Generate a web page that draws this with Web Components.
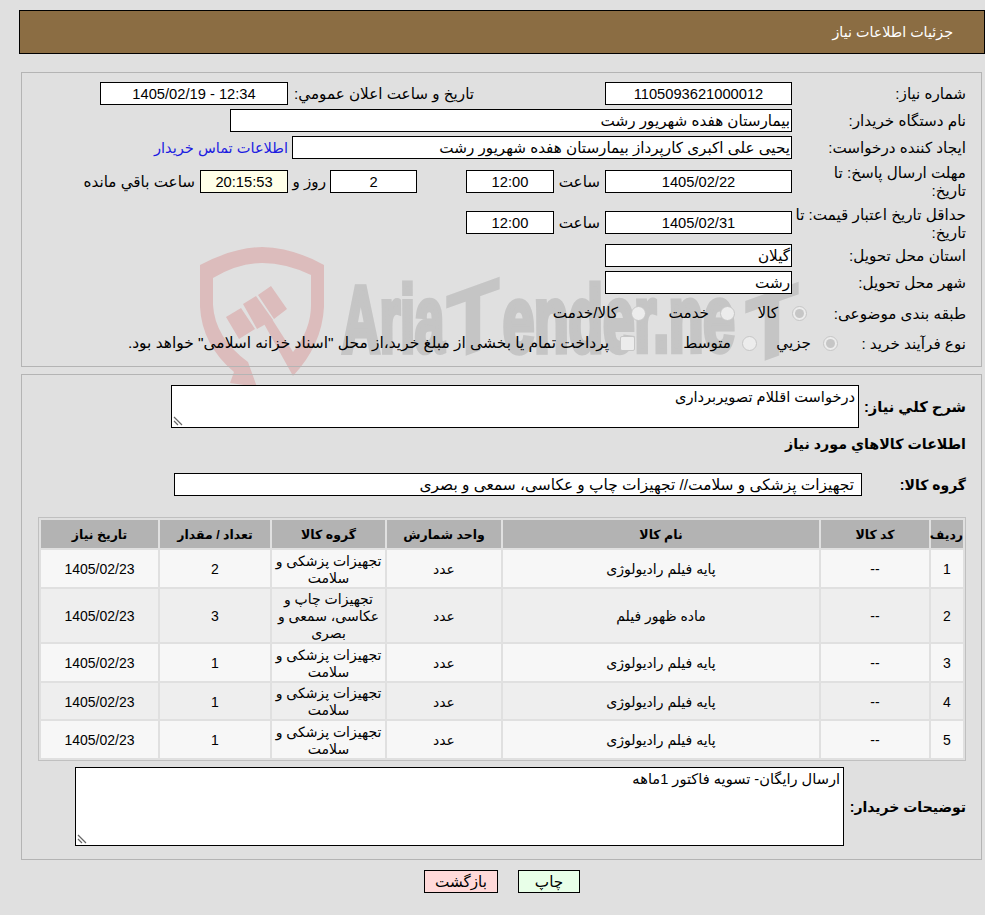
<!DOCTYPE html>
<html lang="fa" dir="rtl">
<head>
<meta charset="utf-8">
<title>جزئیات اطلاعات نیاز</title>
<style>
    html, body { margin: 0; padding: 0; background: #e0e0e0; }
    body { font: 15.2px "Liberation Sans", "DejaVu Sans", sans-serif; color: #000; overflow: hidden; }
</style>
</head>
<body>
<at-page>
    <at-watermark slot="back"></at-watermark>
    <at-header>جزئیات اطلاعات نیاز</at-header>
    <at-panel style="--panel-top: 18px; --panel-h: 295px; --panel-pad: 9px">
        <at-row label="شماره نیاز:" style="--row-h: 23px">
            <at-box w="187" center num>1105093621000012</at-box>
            <at-text style="margin-right: 131px; width: 186px">تاریخ و ساعت اعلان عمومي:</at-text>
            <at-box w="188" center num>12:34 - 1405/02/19</at-box>
        </at-row>
        <at-row label="نام دستگاه خریدار:" style="--row-h: 23px; --row-top: 4px">
            <at-box w="562">بیمارستان هفده شهریور رشت</at-box>
        </at-row>
        <at-row label="ایجاد کننده درخواست:" style="--row-h: 23px; --row-top: 4px">
            <at-box w="500">یحیی علی اکبری کارپرداز بیمارستان هفده شهریور رشت</at-box>
            <at-text style="margin-right: 4px; color: #1c1ce0; font-size: 14.6px">اطلاعات تماس خریدار</at-text>
        </at-row>
        <at-row top label="مهلت ارسال پاسخ: تا تاریخ:" style="--row-h: 42px; --row-top: 4px; --items-top: 7px; --label-pad: 16px">
            <at-box w="187" h="23" center num>1405/02/22</at-box>
            <at-text style="margin-right: 5px; width: 46px">ساعت</at-text>
            <at-box w="88" h="23" center num>12:00</at-box>
            <at-text style="width: 49px"></at-text>
            <at-box w="87" h="23" center num>2</at-box>
            <at-text style="margin-right: 4px; width: 38px">روز و</at-text>
            <at-box w="88" h="23" center num tint="#ffffe8">20:15:53</at-box>
            <at-text style="margin-right: 5px">ساعت باقي مانده</at-text>
        </at-row>
        <at-row top label="حداقل تاریخ اعتبار قیمت: تا تاریخ:" style="--row-h: 35px; --items-top: 6px">
            <at-box w="187" h="23" center num>1405/02/31</at-box>
            <at-text style="margin-right: 5px; width: 46px">ساعت</at-text>
            <at-box w="88" h="23" center num>12:00</at-box>
        </at-row>
        <at-row label="استان محل تحویل:" style="--row-h: 23px; --row-top: 4px">
            <at-box w="187">گیلان</at-box>
        </at-row>
        <at-row label="شهر محل تحویل:" style="--row-h: 23px; --row-top: 4px">
            <at-box w="187">رشت</at-box>
        </at-row>
        <at-row label="طبقه بندی موضوعی:" label-w="159" style="--row-h: 24px; --row-top: 7px">
            <at-radio checked style="width: 72px; --radio-gap: 14px">کالا</at-radio>
            <at-radio style="width: 89px; --radio-gap: 11px">خدمت</at-radio>
            <at-radio style="--radio-gap: 13px">کالا/خدمت</at-radio>
        </at-row>
        <at-row label="نوع فرآیند خرید :" label-w="128" style="--row-h: 24px; --row-top: 6px">
            <at-radio checked style="width: 81px; --radio-gap: 12px">جزيي</at-radio>
            <at-radio style="width: 122px; --radio-gap: 11px">متوسط</at-radio>
            <at-radio square style="--radio-gap: 11px; font-size: 15.45px">پرداخت تمام یا بخشی از مبلغ خرید،از محل "اسناد خزانه اسلامی" خواهد بود.</at-radio>
        </at-row>
    </at-panel>
    <at-panel style="--panel-top: 7px; --panel-h: 486px; --panel-pad: 10px">
        <at-row strong label="شرح كلي نياز:" label-w="107" style="--row-h: 43px; --label-size: 14.7px">
            <at-note w="688" h="43">درخواست اقللام تصویربرداری</at-note>
        </at-row>
        <at-row strong label="اطلاعات كالاهاي مورد نياز" label-w="300" style="--row-h: 22px; --row-top: 4px; --label-size: 14.25px"></at-row>
        <at-row strong label="گروه کالا:" label-w="104" style="--row-h: 23px; --row-top: 19px">
            <at-box w="688" h="23" wide>تجهیزات پزشکی و سلامت// تجهیزات چاپ و عکاسی، سمعی و بصری</at-box>
        </at-row>
        <at-table style="margin-top: 21px"></at-table>
        <at-row strong label="توضیحات خریدار:" label-w="122" style="--row-h: 79px; --row-top: 6px">
            <at-note w="769" h="79">ارسال رایگان- تسویه فاکتور 1ماهه</at-note>
        </at-row>
    </at-panel>
    <at-actions>
        <at-button tint="#e8ffe8" w="62">چاپ</at-button>
        <at-button tint="#ffd9d9" w="74">بازگشت</at-button>
    </at-actions>
</at-page>

<template id="page-tpl">
    <style>
        :host { display: block; position: relative; width: 985px; height: 915px; box-sizing: border-box; padding: 10px 0 0 19px; overflow: hidden; }
        .back { position: absolute; inset: 0; z-index: 0; }
        .front { position: relative; z-index: 1; }
    </style>
    <div class="back"><slot name="back"></slot></div>
    <div class="front"><slot></slot></div>
</template>

<template id="watermark-tpl">
    <style>
        :host { display: block; width: 985px; height: 915px; }
        svg { display: block; }
        text { font: bold 94px "Liberation Sans", sans-serif; fill: #c5c5c5; stroke: #c5c5c5; stroke-width: 6px; direction: ltr; }
        text.bar { stroke-width: 2px; }
    </style>
    <svg width="985" height="915" viewBox="0 0 985 915">
        <path fill="#dcbcbc" fill-rule="evenodd" d="M200 265 Q232 248 262 247 Q294 248 324 265 V307 Q322 345 293 376 L263 322 L270 316 L293 352 Q311 330 311 305 V275 Q286 263 262 263 Q238 263 213 278 V305 Q215 338 248 362 L257 387 L230 383 L234 372 Q202 345 200 307 Z"/>
        <path fill="#dcbcbc" d="M226 317 L241 308 L255 329 L239 339 Z M243 304 L256 296 L273 320 L257 329 Z M258 295 L271 286 L287 309 L274 319 Z"/>
        <text transform="translate(342 352) rotate(-.3) scale(.56 1)">Aria</text>
        <text class="bar" text-anchor="middle" transform="translate(473 352) skewY(-20) scale(.93 1)">T</text>
        <text transform="translate(503 352) rotate(-.3) scale(.6 1)">ender.ne</text>
        <text class="bar" text-anchor="middle" transform="translate(772 357) skewY(-20) scale(.93 1)">T</text>
    </svg>
</template>

<template id="header-tpl">
    <style>
        :host { display: block; height: 42px; border: 1px solid #000; background: #8b6d43; color: #fff; font-size: 14.3px; line-height: 42px; padding-right: 31px; }
    </style>
    <slot></slot>
</template>

<template id="panel-tpl">
    <style>
        :host { display: block; box-sizing: border-box; margin: var(--panel-top, 0) 3px 0 2px; height: var(--panel-h, auto); border: 1px solid #b4b4b4; padding: var(--panel-pad, 8px) 15px 0 16px; }
    </style>
    <slot></slot>
</template>

<template id="row-tpl">
    <style>
        :host { display: flex; height: var(--row-h, 23px); margin-top: var(--row-top, 0); align-items: center; }
        :host([top]) { align-items: flex-start; }
        :host([top]) .items { margin-top: var(--items-top, 0); }
        .label { flex: none; box-sizing: border-box; line-height: 18px; padding: 1px 0 0 var(--label-pad, 0); }
        :host([strong]) .label { font-weight: bold; font-size: var(--label-size, 14px); white-space: nowrap; }
        .items { display: flex; align-items: center; }
    </style>
    <div class="label"></div>
    <div class="items"><slot></slot></div>
</template>

<template id="box-tpl">
    <style>
        :host { display: block; flex: none; box-sizing: border-box; border: 1px solid #000; background: #fff; line-height: 21px; padding: 0 1px; white-space: nowrap; overflow: hidden; }
        :host([center]) { text-align: center; }
        :host([num]) { font-size: 14.7px; line-height: 22px; }
        :host([wide]) { padding-right: 7px; font-size: 15.4px; }
    </style>
    <slot></slot>
</template>

<template id="text-tpl">
    <style>
        :host { display: block; flex: none; white-space: nowrap; }
    </style>
    <slot></slot>
</template>

<template id="radio-tpl">
    <style>
        :host { display: flex; flex: none; align-items: center; white-space: nowrap; }
        .dot { flex: none; box-sizing: border-box; width: 15px; height: 15px; border-radius: 50%; border: 1px solid #c6c6c6; background: #ececec; margin-left: var(--radio-gap, 12px); position: relative; }
        :host([checked]) .dot::after { content: ""; position: absolute; inset: 2px; border-radius: 50%; background: #c6c6c6; }
        :host([square]) .dot { border-radius: 2px; }
    </style>
    <span class="dot"></span><slot></slot>
</template>

<template id="note-tpl">
    <style>
        :host { display: block; flex: none; position: relative; box-sizing: border-box; border: 1px solid #000; background: #fff; padding: 3px 3px; line-height: 17px; font-size: 14.6px; }
        svg { position: absolute; left: 1px; bottom: 1px; }
    </style>
    <slot></slot>
    <svg width="10" height="10" viewBox="0 0 10 10"><path d="M1 1 L9 9 M1 5 L5 9" stroke="#666" stroke-width="1.2" fill="none"/></svg>
</template>

<template id="table-tpl">
    <style>
        :host { display: block; }
        table { width: 928px; table-layout: fixed; border-collapse: separate; border-spacing: 2px; border: 1px solid #c0c0c0; padding: 0; font-size: 14px; }
        th { background: #b3b3b3; height: 28px; padding: 0; font-size: 12.5px; }
        td { box-sizing: border-box; text-align: center; padding: 2px 0 0; line-height: 17px; height: 37px; }
        tr:nth-child(even) td { background: #f7f7f7; }
        tr:nth-child(odd) td { background: #eeeeee; }
        tr.tall td { height: 53px; }
        tr.short td { height: 36px; }
    </style>
    <table>
        <colgroup><col style="width:32px"><col style="width:108px"><col style="width:316px"><col style="width:114px"><col style="width:113px"><col style="width:110px"><col style="width:117px"></colgroup>
        <tbody></tbody>
    </table>
</template>

<template id="button-tpl">
    <style>
        :host { display: block; box-sizing: border-box; height: 23px; border: 1px solid #000; text-align: center; line-height: 21px; }
    </style>
    <slot></slot>
</template>

<template id="actions-tpl">
    <style>
        :host { display: flex; justify-content: center; gap: 20px; margin-top: 10px; }
    </style>
    <slot></slot>
</template>

<script>
    // plain elements: clone the template and attach
    function shadow(el, id) {
        var root = el.attachShadow({mode: 'open'});
        root.appendChild(document.getElementById(id).content.cloneNode(true));
        return root;
    }

    customElements.define('at-page', class extends HTMLElement {
        constructor() { super(); shadow(this, 'page-tpl'); }
    });
    customElements.define('at-watermark', class extends HTMLElement {
        constructor() { super(); shadow(this, 'watermark-tpl'); }
    });
    customElements.define('at-header', class extends HTMLElement {
        constructor() { super(); shadow(this, 'header-tpl'); }
    });
    customElements.define('at-panel', class extends HTMLElement {
        constructor() { super(); shadow(this, 'panel-tpl'); }
    });
    customElements.define('at-row', class extends HTMLElement {
        constructor() { super(); shadow(this, 'row-tpl'); }
        connectedCallback() {
            var label = this.shadowRoot.querySelector('.label');
            label.textContent = this.getAttribute('label');
            label.style.width = (this.getAttribute('label-w') || 174) + 'px';
        }
    });
    customElements.define('at-box', class extends HTMLElement {
        constructor() { super(); shadow(this, 'box-tpl'); }
        connectedCallback() {
            this.style.width = this.getAttribute('w') + 'px';
            this.style.height = (this.getAttribute('h') || 23) + 'px';
            if (this.hasAttribute('tint')) this.style.background = this.getAttribute('tint');
        }
    });
    customElements.define('at-text', class extends HTMLElement {
        constructor() { super(); shadow(this, 'text-tpl'); }
    });
    customElements.define('at-radio', class extends HTMLElement {
        constructor() { super(); shadow(this, 'radio-tpl'); }
    });
    customElements.define('at-note', class extends HTMLElement {
        constructor() { super(); shadow(this, 'note-tpl'); }
        connectedCallback() {
            this.style.width = this.getAttribute('w') + 'px';
            this.style.height = this.getAttribute('h') + 'px';
        }
    });
    customElements.define('at-button', class extends HTMLElement {
        constructor() { super(); shadow(this, 'button-tpl'); }
        connectedCallback() {
            this.style.width = this.getAttribute('w') + 'px';
            this.style.background = this.getAttribute('tint');
        }
    });
    customElements.define('at-actions', class extends HTMLElement {
        constructor() { super(); shadow(this, 'actions-tpl'); }
    });

    var heads = ['ردیف', 'کد کالا', 'نام کالا', 'واحد شمارش', 'گروه کالا', 'تعداد / مقدار', 'تاریخ نیاز'];
    var medical = 'تجهیزات پزشکی و سلامت';
    var rows = [
        ['1', '--', 'پایه فیلم رادیولوژی', 'عدد', medical, '2', '1405/02/23'],
        ['2', '--', 'ماده ظهور فیلم', 'عدد', 'تجهیزات چاپ و عکاسی، سمعی و بصری', '3', '1405/02/23'],
        ['3', '--', 'پایه فیلم رادیولوژی', 'عدد', medical, '1', '1405/02/23'],
        ['4', '--', 'پایه فیلم رادیولوژی', 'عدد', medical, '1', '1405/02/23'],
        ['5', '--', 'پایه فیلم رادیولوژی', 'عدد', medical, '1', '1405/02/23']
    ];
    customElements.define('at-table', class extends HTMLElement {
        constructor() { super(); shadow(this, 'table-tpl'); }
        connectedCallback() {
            var body = this.shadowRoot.querySelector('tbody');
            var head = document.createElement('tr');
            heads.forEach(function(h) {
                var th = document.createElement('th');
                th.textContent = h;
                head.appendChild(th);
            });
            body.appendChild(head);
            rows.forEach(function(r, i) {
                var tr = document.createElement('tr');
                if (i == 1) tr.className = 'tall';
                if (i == 3) tr.className = 'short';
                r.forEach(function(c) {
                    var td = document.createElement('td');
                    td.textContent = c;
                    tr.appendChild(td);
                });
                body.appendChild(tr);
            });
        }
    });
</script>
</body>
</html>
